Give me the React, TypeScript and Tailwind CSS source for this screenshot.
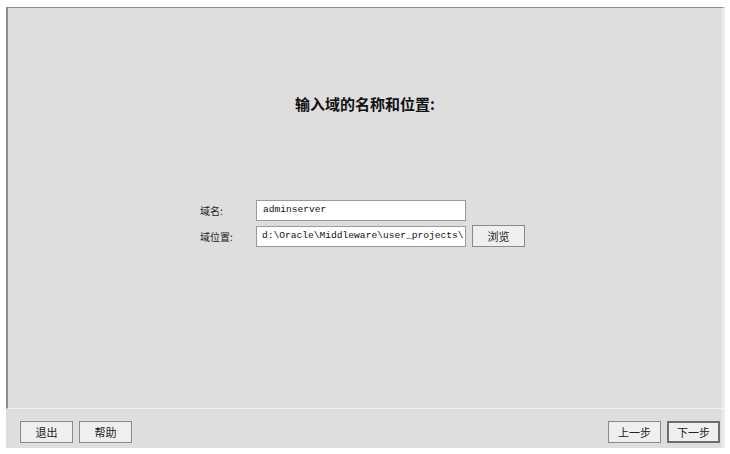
import React from 'react';

const cjk = { fontFamily: '"Noto Sans CJK SC", "Liberation Sans", sans-serif' };
const mono = { fontFamily: '"Liberation Mono", "Noto Sans CJK SC", monospace' };

function Btn({ label, primary }: { label: string; primary?: boolean }) {
  return (
    <button
      className={`w-[53px] h-[22px] bg-[#efefef] text-[11px] text-[#222] flex items-center justify-center ${
        primary ? 'border-2 border-[#6e6e6e]' : 'border border-[#8a8a8a]'
      }`}
      style={cjk}
    >
      {label}
    </button>
  );
}

export default function App() {
  return (
    <div className="w-[730px] h-[454px] bg-white pt-[7px] pl-[6px] pr-[5px]">
      <div className="h-[441px] flex flex-col bg-[#dedede]">
        {/* main area */}
        <div className="h-[402px] flex flex-col border-l-2 border-t border-[#8c8c8c] border-r-[3px] border-r-[#ececec] border-b border-b-[#f2f2f2]">
          <div className="pt-[85px] text-center text-[15px] font-bold text-[#111]" style={cjk}>
            输入域的名称和位置:
          </div>

          <div className="mt-[84px] flex flex-col gap-[5px] pl-[192px]">
            <div className="flex items-center h-[21px]">
              <span className="w-[56px] text-[10px] text-[#222]" style={cjk}>域名:</span>
              <div className="w-[210px] h-[21px] bg-white border border-[#9a9a9a] flex items-center pl-[6px] text-[9.6px] text-[#111]" style={mono}>
                adminserver
              </div>
            </div>
            <div className="flex items-center h-[21px]">
              <span className="w-[56px] text-[10px] text-[#222]" style={cjk}>域位置:</span>
              <div className="w-[210px] h-[21px] bg-white border border-[#9a9a9a] flex items-center pl-[5px] overflow-hidden whitespace-nowrap text-[9.6px] text-[#111]" style={mono}>
                d:\Oracle\Middleware\user_projects\
              </div>
              <div className="ml-[6px]">
                <Btn label="浏览" />
              </div>
            </div>
          </div>
        </div>

        {/* bottom bar */}
        <div className="flex-1 flex items-center justify-between pl-[14px] pr-[2px] pt-[7px] border-r-[3px] border-[#ececec]">
          <div className="flex gap-[6px]">
            <Btn label="退出" />
            <Btn label="帮助" />
          </div>
          <div className="flex gap-[6px]">
            <Btn label="上一步" />
            <Btn label="下一步" primary />
          </div>
        </div>
      </div>
    </div>
  );
}
